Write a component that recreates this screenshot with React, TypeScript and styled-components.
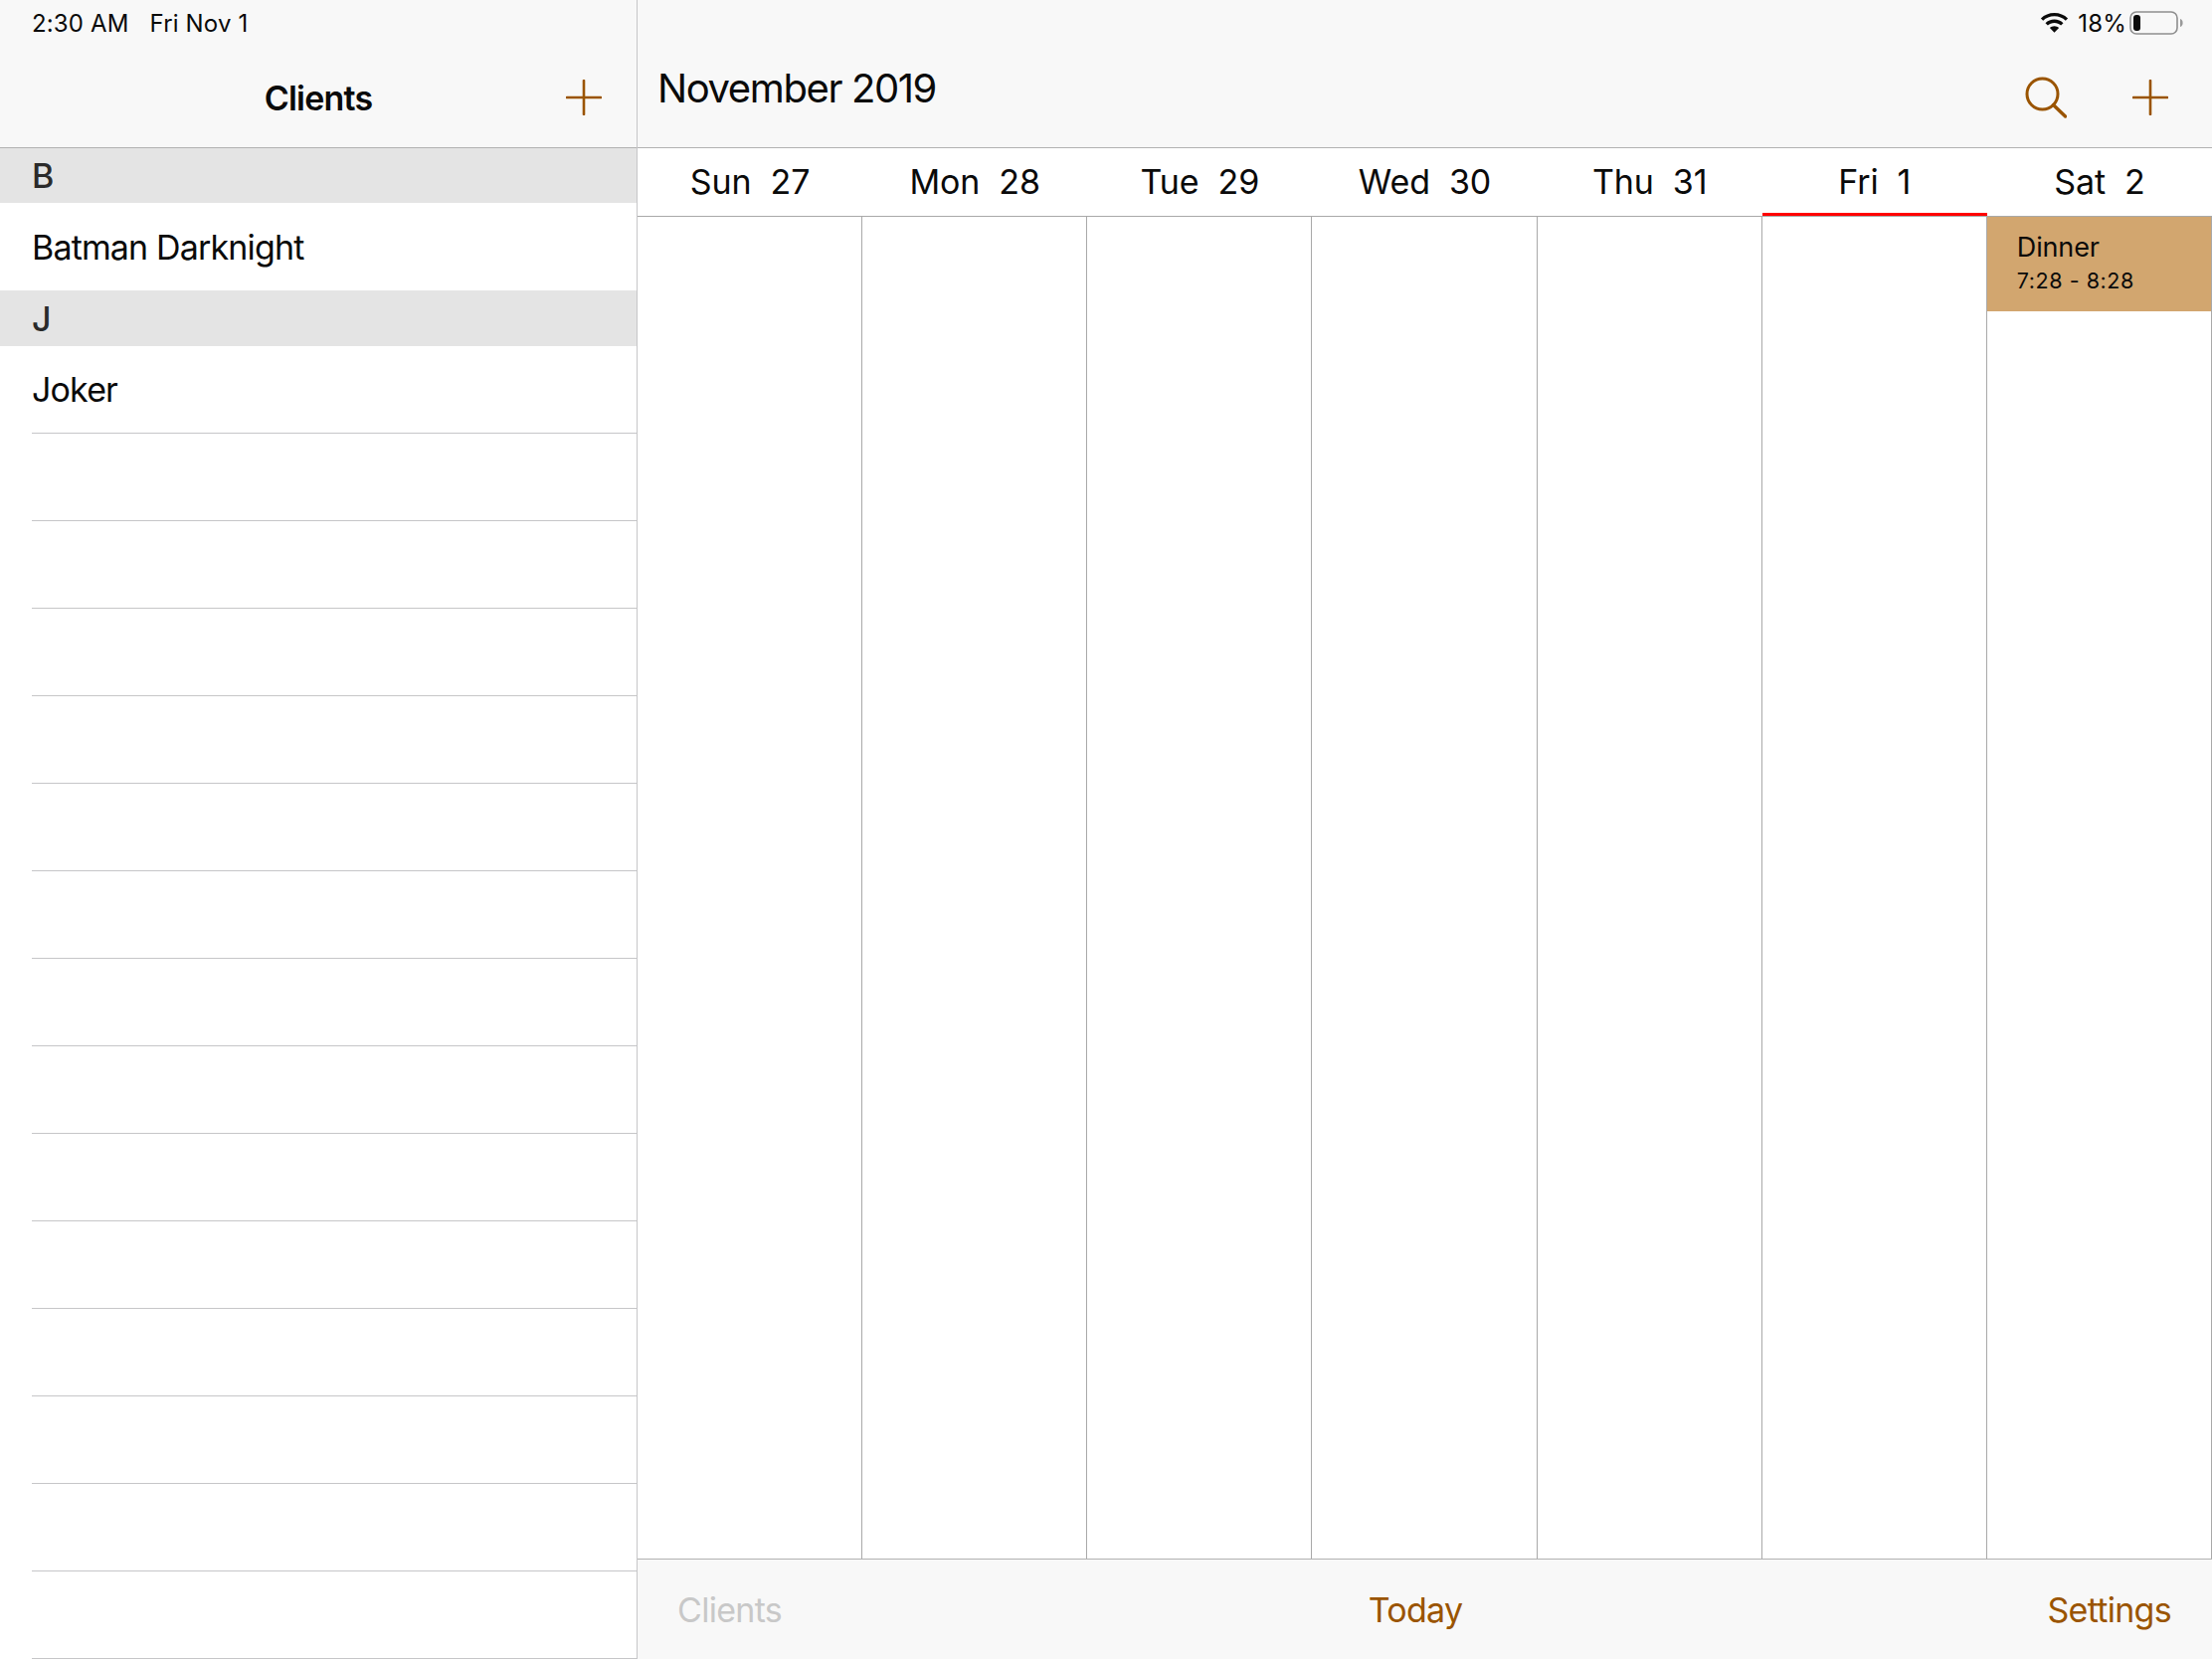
import React from "react"
import styled, { createGlobalStyle } from "styled-components"

const BROWN = "#9a5400"
const LINE = "#c6c6c8"
const GRID = "#a9a9a9"

const GlobalStyle = createGlobalStyle`
  html, body {
    margin: 0;
    padding: 0;
    background: #fff;
    font-family: Inter, "Liberation Sans", sans-serif;
    color: #0a0a0a;
  }
`

const Screen = styled.div`
  width: 2224px;
  height: 1668px;
  display: grid;
  grid-template-columns: 640px 1fr;
  overflow: hidden;
`

const Sidebar = styled.aside`
  display: flex;
  flex-direction: column;
  overflow: hidden;
`

const Main = styled.main`
  display: flex;
  flex-direction: column;
  border-left: 1px solid ${LINE};
  min-width: 0;
`

const Bar = styled.header`
  height: 148px;
  background: #f8f8f8;
  border-bottom: 1px solid #b2b2b2;
  flex: none;
  display: flex;
  flex-direction: column;
`

const StatusRow = styled.div<{ $right?: boolean }>`
  height: 46px;
  flex: none;
  display: flex;
  align-items: center;
  gap: 21px;
  padding: 0 29px 0 32px;
  font-size: 24px;
  letter-spacing: 0.15px;
  justify-content: ${(p) => (p.$right ? "flex-end" : "flex-start")};
`

const StatusGroup = styled.div`
  display: flex;
  align-items: center;
  gap: 6px;
`

const Percent = styled.span`
  margin: 0 -3px 0 3px;
`

const SideNav = styled.div`
  flex: 1;
  display: flex;
  align-items: center;
  justify-content: center;
  position: relative;
  padding-top: 2px;
`

const SideTitle = styled.h1`
  margin: 0;
  font-size: 34px;
  font-weight: 600;
  letter-spacing: -0.8px;
`

const SideAdd = styled.button`
  position: absolute;
  right: 35px;
  top: 34px;
  padding: 0;
  border: 0;
  background: none;
  display: flex;
`

const MainNav = styled.div`
  flex: 1;
  display: flex;
  align-items: flex-start;
  padding: 19px 44px 0 20px;
`

const MonthTitle = styled.h2`
  margin: 0;
  flex: 1;
  font-size: 40px;
  line-height: 48px;
  font-weight: 400;
  letter-spacing: -1.4px;
`

const NavActions = styled.div`
  display: flex;
  align-items: center;
  gap: 66px;
  padding-top: 12px;
`

const IconButton = styled.button`
  padding: 0;
  border: 0;
  background: none;
  display: flex;
`

const SectionHead = styled.div<{ $tall?: boolean }>`
  height: ${(p) => (p.$tall ? "56px" : "55px")};
  flex: none;
  background: #e4e4e4;
  display: flex;
  align-items: center;
  padding-left: 32px;
  font-size: 34px;
  font-weight: 500;
  color: #2a2a2a;
`

const Row = styled.div<{ $ruled?: boolean }>`
  height: 88px;
  flex: none;
  box-sizing: border-box;
  margin-left: ${(p) => (p.$ruled ? "32px" : "0")};
  padding-left: ${(p) => (p.$ruled ? "0" : "32px")};
  display: flex;
  align-items: center;
  font-size: 34px;
  letter-spacing: -0.85px;
  border-bottom: ${(p) => (p.$ruled ? `1px solid ${LINE}` : "0")};
`

const DayHeader = styled.div`
  height: 69px;
  flex: none;
  display: grid;
  grid-template-columns: repeat(7, 1fr);
  border-bottom: 1px solid ${GRID};
  box-sizing: border-box;
`

const DayLabel = styled.div<{ $today?: boolean }>`
  display: flex;
  align-items: center;
  justify-content: center;
  gap: 19px;
  font-size: 34px;
  letter-spacing: -0.1px;
  padding-top: 1px;
  border-bottom: 3px solid ${(p) => (p.$today ? "#ff0000" : "transparent")};
`

const Week = styled.div`
  flex: 1;
  display: grid;
  grid-template-columns: repeat(7, 1fr);
`

const DayColumn = styled.div`
  border-right: 1px solid ${GRID};
`

const EventCard = styled.div`
  height: 95px;
  box-sizing: border-box;
  background: #d2a66f;
  padding: 14px 0 0 30px;
`

const EventTitle = styled.div`
  font-size: 27px;
  line-height: 34px;
  letter-spacing: -0.15px;
`

const EventTime = styled.div`
  font-size: 21.5px;
  line-height: 32px;
  letter-spacing: 0.55px;
`

const Toolbar = styled.footer`
  height: 101px;
  flex: none;
  box-sizing: border-box;
  background: #f8f8f8;
  border-top: 1px solid #b2b2b2;
  display: grid;
  grid-template-columns: 1fr auto 1fr;
  align-items: center;
  padding: 0 41px 0 40px;
  font-size: 34px;
  letter-spacing: -0.7px;
`

const ToolItem = styled.span<{ $muted?: boolean; $end?: boolean; $shift?: boolean }>`
  color: ${(p) => (p.$muted ? "#c8c8c8" : BROWN)};
  text-align: ${(p) => (p.$end ? "right" : "left")};
  margin-right: ${(p) => (p.$shift ? "18px" : "0")};
`

const PlusIcon = ({ size = 36 }: { size?: number }) => (
  <svg width={size} height={size} viewBox="0 0 36 36" fill="none" stroke={BROWN} strokeWidth="2.6" strokeLinecap="round">
    <path d="M18 1v34M1 18h34" />
  </svg>
)

const SearchIcon = () => (
  <svg width="42" height="42" viewBox="0 0 42 42" fill="none" stroke={BROWN} strokeWidth="3" strokeLinecap="round">
    <circle cx="17.5" cy="17.5" r="15.5" />
    <path d="M28.5 28.5 40.5 40" strokeWidth="3.4" />
  </svg>
)

const WifiIcon = () => (
  <svg width="29" height="20" viewBox="0 0 28 20" fill="#0a0a0a">
    <path d="M14 0C8.7 0 4 2 .4 5.4l2.3 2.4C5.6 5 9.6 3.3 14 3.3s8.400 1.700 11.300 4.500l2.300-2.400C24 2 19.300 0 14 0z" />
    <path d="M14 6.600c-3.400 0-6.600 1.300-9 3.600l2.400 2.400c1.700-1.600 4.100-2.700 6.600-2.700s4.900 1.100 6.600 2.700l2.400-2.400c-2.400-2.300-5.600-3.600-9-3.600z" />
    <path d="M14 13.200c-1.800 0-3.400.7-4.600 1.800L14 19.800l4.600-4.800c-1.200-1.100-2.800-1.800-4.600-1.800z" />
  </svg>
)

const BatteryIcon = () => (
  <svg width="54" height="24" viewBox="0 0 54 24">
    <rect x="1" y="1" width="47" height="22" rx="6" fill="none" stroke="#8e8e8e" strokeWidth="1.6" />
    <rect x="4" y="4" width="7" height="16" rx="3" fill="#0a0a0a" />
    <path d="M51 8c1.800.5 2.600 2 2.600 4s-.8 3.500-2.600 4z" fill="#9a9a9a" />
  </svg>
)

const days = [
  { name: "Sun", num: "27" },
  { name: "Mon", num: "28" },
  { name: "Tue", num: "29" },
  { name: "Wed", num: "30" },
  { name: "Thu", num: "31" },
  { name: "Fri", num: "1", today: true },
  { name: "Sat", num: "2" },
]

const emptyRows = Array.from({ length: 14 }, (_, i) => i)

const App: React.FC = () => {
  return (
    <Screen>
      <GlobalStyle />
      <Sidebar>
        <Bar>
          <StatusRow>
            <span>2:30 AM</span>
            <span>Fri Nov 1</span>
          </StatusRow>
          <SideNav>
            <SideTitle>Clients</SideTitle>
            <SideAdd>
              <PlusIcon />
            </SideAdd>
          </SideNav>
        </Bar>
        <SectionHead>B</SectionHead>
        <Row>Batman Darknight</Row>
        <SectionHead $tall>J</SectionHead>
        <Row $ruled>Joker</Row>
        {emptyRows.map((i) => (
          <Row $ruled key={i} />
        ))}
      </Sidebar>

      <Main>
        <Bar>
          <StatusRow $right>
            <StatusGroup>
              <WifiIcon />
              <Percent>18%</Percent>
              <BatteryIcon />
            </StatusGroup>
          </StatusRow>
          <MainNav>
            <MonthTitle>November 2019</MonthTitle>
            <NavActions>
              <IconButton>
                <SearchIcon />
              </IconButton>
              <IconButton>
                <PlusIcon />
              </IconButton>
            </NavActions>
          </MainNav>
        </Bar>
        <DayHeader>
          {days.map((d) => (
            <DayLabel key={d.name} $today={d.today}>
              <span>{d.name}</span>
              <span>{d.num}</span>
            </DayLabel>
          ))}
        </DayHeader>
        <Week>
          {days.map((d) => (
            <DayColumn key={d.name}>
              {d.name === "Sat" && (
                <EventCard>
                  <EventTitle>Dinner</EventTitle>
                  <EventTime>7:28 - 8:28</EventTime>
                </EventCard>
              )}
            </DayColumn>
          ))}
        </Week>
        <Toolbar>
          <ToolItem $muted>Clients</ToolItem>
          <ToolItem $shift>Today</ToolItem>
          <ToolItem $end>Settings</ToolItem>
        </Toolbar>
      </Main>
    </Screen>
  )
}

export default App
